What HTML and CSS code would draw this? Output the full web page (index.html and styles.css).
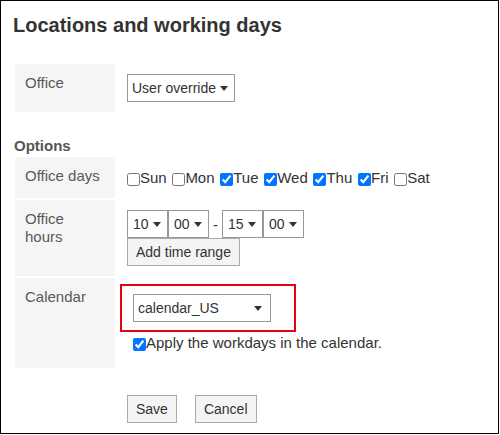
FILE: index.html
```html
<!DOCTYPE html>
<html lang="en">
<head>
  <meta charset="UTF-8">
  <title>Locations and working days</title>
  <link rel="stylesheet" href="styles.css">
</head>
<body>
  <div class="container">
    <h1>Locations and working days</h1>

    <table class="form-table first">
      <tr>
        <td class="label">Office</td>
        <td class="value">
          <div class="line">
            <span class="sel">
              <select>
                <option>User override</option>
                <option>Tokyo</option>
              </select>
            </span>
          </div>
        </td>
      </tr>
    </table>

    <h2>Options</h2>

    <table class="form-table">
      <tr>
        <td class="label">Office days</td>
        <td class="value days">
          <label><input type="checkbox">Sun</label>
          <label><input type="checkbox">Mon</label>
          <label><input type="checkbox" checked>Tue</label>
          <label><input type="checkbox" checked>Wed</label>
          <label><input type="checkbox" checked>Thu</label>
          <label><input type="checkbox" checked>Fri</label>
          <label><input type="checkbox">Sat</label>
        </td>
      </tr>
      <tr>
        <td class="label">Office<br>hours</td>
        <td class="value">
          <div class="line">
            <span class="sel sel-time"><select><option>10</option><option>11</option></select></span>
            <span class="sel sel-time"><select><option>00</option><option>30</option></select></span>
            <span class="dash">-</span>
            <span class="sel sel-time"><select><option>15</option><option>16</option></select></span>
            <span class="sel sel-time"><select><option>00</option><option>30</option></select></span>
          </div>
          <button type="button" class="btn">Add time range</button>
        </td>
      </tr>
      <tr>
        <td class="label">Calendar</td>
        <td class="value">
          <div class="cal-box">
            <span class="sel sel-cal highlight">
              <select>
                <option>calendar_US</option>
                <option>calendar_JP</option>
              </select>
            </span>
          </div>
          <label class="apply"><input type="checkbox" checked>Apply the workdays in the calendar.</label>
        </td>
      </tr>
    </table>

    <div class="actions">
      <button type="button" class="btn">Save</button>
      <button type="button" class="btn">Cancel</button>
    </div>
  </div>
</body>
</html>
```

FILE: styles.css
```css
html, body {
  margin: 0;
  padding: 0;
  background: #fff;
}
body {
  font-family: "Liberation Sans", Arial, sans-serif;
  color: #333;
}
.container {
  box-sizing: border-box;
  width: 499px;
  height: 434px;
  border: 1px solid #000;
  padding: 13px 12px 0;
}
h1 {
  margin: 0;
  font-size: 20px;
  line-height: 23px;
  font-weight: bold;
  color: #333;
}
h2 {
  margin: 23px 0 1px 1px;
  font-size: 15px;
  line-height: 17px;
  font-weight: bold;
  color: #555;
}
.form-table {
  border-collapse: separate;
  border-spacing: 2px;
}
.form-table.first {
  margin-top: 25px;
}
.form-table td {
  padding: 10px;
  vertical-align: top;
}
.label {
  box-sizing: border-box;
  width: 100px;
  background: #f5f5f5;
  color: #595959;
  font-size: 15px;
  line-height: 18px;
}
.value {
  font-size: 15px;
  line-height: 21px;
  color: #333;
}
.line {
  display: flex;
  align-items: center;
}
.sel {
  position: relative;
  display: inline-block;
}
.sel select {
  appearance: none;
  -webkit-appearance: none;
  box-sizing: border-box;
  height: 28px;
  margin: 0;
  padding: 0 17px 0 4px;
  border: 1px solid #999;
  border-radius: 0;
  background: #fff;
  font-family: "Liberation Sans", Arial, sans-serif;
  font-size: 14px;
  color: #333;
  display: block;
}
.sel-time select {
  padding: 0 18px 0 5px;
}
.sel::after {
  content: "";
  position: absolute;
  right: 7px;
  top: 12px;
  border-left: 4px solid transparent;
  border-right: 4px solid transparent;
  border-top: 5px solid #333;
  pointer-events: none;
}
.dash {
  margin: 0 4px;
  font-size: 15px;
}
.days label {
  margin-right: 1.5px;
}
.days input,
.apply input {
  width: 13px;
  height: 13px;
  margin: 0;
  vertical-align: middle;
}
.btn {
  box-sizing: border-box;
  height: 28px;
  margin: 0;
  padding: 0 8px;
  border: 1px solid #aaa;
  border-radius: 0;
  background: #f4f4f4;
  font-family: "Liberation Sans", Arial, sans-serif;
  font-size: 14px;
  color: #333;
  cursor: pointer;
}
.cal-box {
  padding: 6px 0 6px 6px;
}
.sel-cal select {
  width: 138px;
}
.sel-cal::after {
  right: 9px;
}
.highlight::before {
  content: "";
  position: absolute;
  left: -13px;
  top: -10px;
  width: 176px;
  height: 48px;
  box-sizing: border-box;
  border: 2px solid #e60012;
  pointer-events: none;
}
.apply {
  display: block;
  margin: 4px 0 5px;
  padding-left: 6px;
}
.actions {
  margin-top: 25px;
  padding-left: 114px;
  display: flex;
  gap: 18px;
}
```
